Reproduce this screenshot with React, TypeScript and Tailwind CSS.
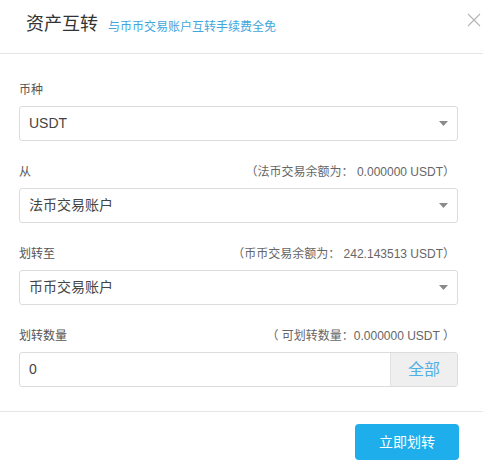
import { useState } from "react";

const FONT = {
  fontFamily: '"Liberation Sans", "Noto Sans CJK SC", sans-serif',
};

function Caret() {
  return (
    <svg width="9" height="5" viewBox="0 0 9 5" className="shrink-0">
      <path d="M0 0 H9 L4.5 5 Z" fill="#8a8a8a" />
    </svg>
  );
}

function Field({
  label,
  hint,
  children,
}: {
  label: string;
  hint?: string;
  children: React.ReactNode;
}) {
  return (
    <div className="flex flex-col">
      <div className="flex h-5 items-center justify-between pr-[3px] text-[12px] text-[#555]">
        <span>{label}</span>
        {hint && <span className="text-[#666]">{hint}</span>}
      </div>
      <div className="mt-[6px]">{children}</div>
    </div>
  );
}

function Select({ value }: { value: string }) {
  return (
    <div className="flex h-[35px] items-center justify-between rounded-[3px] border border-[#dcdcdc] bg-white pl-[9px] pr-[9px] text-[14px] text-[#444]">
      <span>{value}</span>
      <Caret />
    </div>
  );
}

export default function App() {
  const [amount, setAmount] = useState("0");

  return (
    <div className="h-[476px] w-[491px] overflow-hidden bg-white" style={FONT}>
      <div className="w-[483px]">
        <div className="flex h-[54px] items-center border-b border-[#e6e6e6] pl-[26px] pr-[2px]">
          <span className="-mt-[4px] text-[18px] text-[#333]">资产互转</span>
          <span className="ml-[10px] text-[12px] text-[#3ea7de]">
            与币币交易账户互转手续费全免
          </span>
          <button className="ml-auto -mt-[13px] text-[#b4b4b4]" aria-label="close">
            <svg width="14" height="14" viewBox="0 0 14 14">
              <path d="M1 1 L13 13 M13 1 L1 13" stroke="currentColor" strokeWidth="1.1" />
            </svg>
          </button>
        </div>

        <div className="flex flex-col gap-[21px] pb-[24px] pl-[19px] pr-[25px] pt-[26px]">
          <Field label="币种">
            <Select value="USDT" />
          </Field>
          <Field label="从" hint="（法币交易余额为： 0.000000 USDT）">
            <Select value="法币交易账户" />
          </Field>
          <Field label="划转至" hint="（币币交易余额为： 242.143513 USDT）">
            <Select value="币币交易账户" />
          </Field>
          <Field label="划转数量" hint="（ 可划转数量：0.000000 USDT ）">
            <div className="flex h-[35px] overflow-hidden rounded-[3px] border border-[#dcdcdc]">
              <input
                value={amount}
                onChange={(e) => setAmount(e.target.value)}
                className="min-w-0 flex-1 pl-[9px] text-[14px] text-[#444] outline-none"
              />
              <button className="w-[67px] border-l border-[#e2e2e2] bg-[#efefef] text-[16px] text-[#4eb0e4]">
                全部
              </button>
            </div>
          </Field>
        </div>

        <div className="flex justify-end border-t border-[#e6e6e6] pr-[24px] pt-[12px]">
          <button className="h-[36px] w-[104px] rounded-[4px] bg-[#1eaeeb] text-[14px] text-white">
            立即划转
          </button>
        </div>
      </div>
    </div>
  );
}
